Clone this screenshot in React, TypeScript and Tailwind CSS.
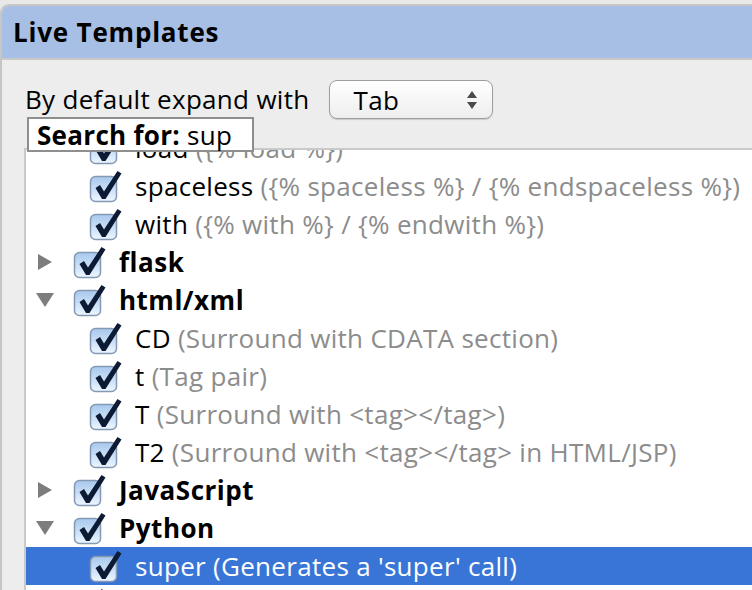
import React from "react";

type Row = {
  level: 0 | 1;
  name: string;
  desc?: string;
  arrow?: "right" | "down";
  selected?: boolean;
};

const rows: Row[] = [
  { level: 1, name: "load", desc: "({% load %})" },
  { level: 1, name: "spaceless", desc: "({% spaceless %} / {% endspaceless %})" },
  { level: 1, name: "with", desc: "({% with %} / {% endwith %})" },
  { level: 0, name: "flask", arrow: "right" },
  { level: 0, name: "html/xml", arrow: "down" },
  { level: 1, name: "CD", desc: "(Surround with CDATA section)" },
  { level: 1, name: "t", desc: "(Tag pair)" },
  { level: 1, name: "T", desc: "(Surround with <tag></tag>)" },
  { level: 1, name: "T2", desc: "(Surround with <tag></tag> in HTML/JSP)" },
  { level: 0, name: "JavaScript", arrow: "right" },
  { level: 0, name: "Python", arrow: "down" },
  { level: 1, name: "super", desc: "(Generates a 'super' call)", selected: true },
  { level: 0, name: "SQL", arrow: "right" },
];

function Checkbox() {
  return (
    <svg width="34" height="34" viewBox="0 0 34 34" className="shrink-0">
      <defs>
        <linearGradient id="cbfill" x1="0" y1="0" x2="0" y2="1">
          <stop offset="0" stopColor="#a8c8ee" />
          <stop offset="0.5" stopColor="#c8def6" />
          <stop offset="1" stopColor="#eef6ff" />
        </linearGradient>
      </defs>
      <rect x="1.5" y="7.5" width="26" height="25" rx="5" fill="url(#cbfill)" stroke="#8499b3" strokeWidth="1.5" />
      <path d="M6.5 19 L11 16 L15 22.5 L28.5 2 L32.5 4.5 L16.5 30 L13 30 Z" fill="#0c1b33" />
    </svg>
  );
}

function Arrow({ dir }: { dir?: "right" | "down" }) {
  if (!dir) return <span className="w-[18px] shrink-0" />;
  return (
    <svg width="18" height="18" viewBox="0 0 18 18" className="shrink-0">
      {dir === "right" ? (
        <path d="M2 1 L16 9 L2 17 Z" fill="#7d7d7d" />
      ) : (
        <path d="M0 2 L18 2 L9 16 Z" fill="#7d7d7d" />
      )}
    </svg>
  );
}

function TreeRow({ row }: { row: Row }) {
  const child = row.level === 1;
  return (
    <div
      className={`flex h-[38px] items-center ${row.selected ? "bg-[#3875d7]" : ""} ${
        child ? "pl-[63px]" : "pl-[10px]"
      }`}
    >
      {!child && <Arrow dir={row.arrow} />}
      <span className={child ? "" : "ml-[19px]"}>
        <Checkbox />
      </span>
      <span className="ml-[12px] whitespace-nowrap">
        <span
          className={`${row.selected ? "text-white" : "text-black"} ${child ? "" : "font-bold tracking-[0.5px]"}`}
        >
          {row.name}
        </span>
        {row.desc && (
          <span className={row.selected ? "text-white" : "text-[#8c8c8c]"}> {row.desc}</span>
        )}
      </span>
    </div>
  );
}

export default function App() {
  return (
    <div
      className="w-[752px] h-[590px] overflow-hidden bg-[#e8e8e8] pt-[4px] text-[26px] leading-none tracking-[0.3px]"
      style={{ fontFamily: '"Open Sans", "DejaVu Sans", sans-serif' }}
    >
      <div className="relative flex h-[586px] flex-col overflow-hidden rounded-tl-[9px] border-l-2 border-t-2 border-[#c6c6c6] bg-[#ededed]">
        <div className="flex h-[54px] shrink-0 items-center border-b-2 border-[#c9c9c9] bg-[#a7bfe4] pl-[11px]">
          <span className="font-bold tracking-[0.8px] text-black">Live Templates</span>
        </div>

        <div className="flex h-[88px] shrink-0 items-start pl-[23px] pt-[20px]">
          <span className="mt-[6px] text-black">By default expand with</span>
          <div className="ml-[19px] flex h-[39px] w-[164px] items-center justify-between rounded-[8px] border border-[#9d9d9d] bg-gradient-to-b from-white to-[#eeeeee] pl-[24px] pr-[14px] shadow-[0_1px_1px_rgba(0,0,0,0.15)]">
            <span className="text-black">Tab</span>
            <svg width="12" height="20" viewBox="0 0 12 20">
              <path d="M1 8 L6 1 L11 8 Z" fill="#4a4a4a" />
              <path d="M1 12 L11 12 L6 19 Z" fill="#4a4a4a" />
            </svg>
          </div>
        </div>

        <div className="ml-[22px] flex-1 overflow-hidden border-l-2 border-t-2 border-[#c9c9c9] bg-white">
          <div className="mt-[-21px]">
            {rows.map((r, i) => (
              <TreeRow key={i} row={r} />
            ))}
          </div>
        </div>

        <div className="absolute left-[25px] top-[111px] flex h-[35px] w-[227px] items-center border-2 border-[#8e8e8e] bg-white pl-[8px]">
          <span className="font-bold text-black">Search for:</span>
          <span className="ml-[7px] text-black">sup</span>
        </div>
      </div>
    </div>
  );
}
